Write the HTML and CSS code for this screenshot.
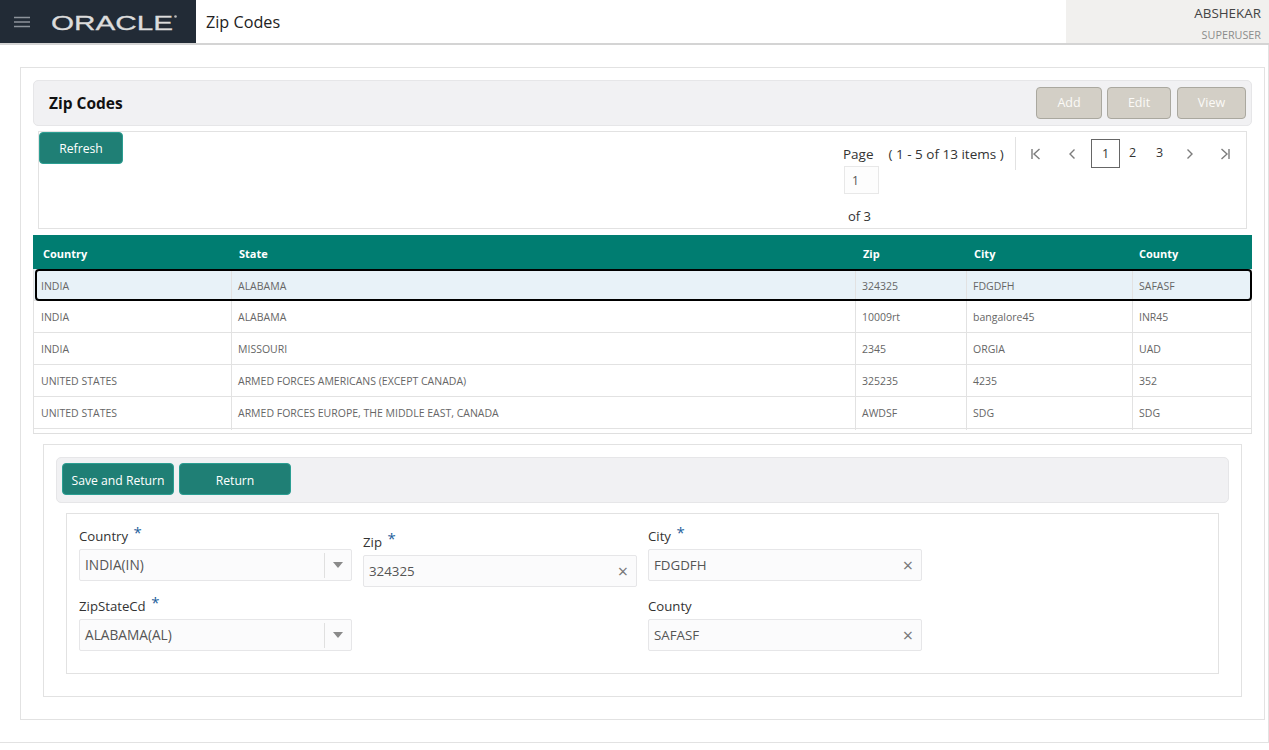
FILE: index.html
```html
<!DOCTYPE html>
<html lang="en">
<head>
<meta charset="utf-8">
<title>Zip Codes</title>
<link rel="stylesheet" href="styles.css">
</head>
<body>
<header class="topbar">
  <div class="brand">
    <svg class="burger" width="18" height="12" viewBox="0 0 18 12"><path d="M1 1.500h16M1 6h16M1 10.500h16" stroke="#8d939b" stroke-width="1.600" fill="none"/></svg>
    <svg class="logo" width="128" height="20" viewBox="0 0 128 20"><text x="0" y="17.500" textLength="122" lengthAdjust="spacingAndGlyphs" class="logo-text">ORACLE</text><circle cx="124.500" cy="4.500" r="1.300" fill="#b9b9b9"/></svg>
  </div>
  <h1 class="page-title">Zip Codes</h1>
  <div class="user">
    <div class="user-name">ABSHEKAR</div>
    <div class="user-role">SUPERUSER</div>
  </div>
</header>

<main class="frame">
  <section class="panel">
    <div class="titlebar">
      <h2 class="section-title">Zip Codes</h2>
      <div class="actions">
        <button class="btn-off btn-add">Add</button>
        <button class="btn-off btn-edit">Edit</button>
        <button class="btn-off btn-view">View</button>
      </div>
    </div>

    <div class="toolbar">
      <button class="btn btn-refresh">Refresh</button>
      <div class="pager">
        <div class="pager-info">
          <div class="pager-line"><span>Page</span><span>( 1 - 5 of 13 items )</span></div>
          <div class="pager-input">1</div>
          <div class="pager-of">of 3</div>
        </div>
        <nav class="pager-nav">
          <svg class="pg-icon" width="14" height="14" viewBox="0 0 14 14"><path d="M3 2v10M10.500 2 5 7l5.500 5" stroke="#7c7c7c" stroke-width="1.400" fill="none"/></svg>
          <svg class="pg-icon pg-prev" width="14" height="14" viewBox="0 0 14 14"><path d="M9.500 2.500 5 7l4.500 4.500" stroke="#7c7c7c" stroke-width="1.400" fill="none"/></svg>
          <span class="pg-num pg-current">1</span>
          <span class="pg-num">2</span>
          <span class="pg-num">3</span>
          <svg class="pg-icon pg-next" width="14" height="14" viewBox="0 0 14 14"><path d="M4.500 2.500 9 7l-4.500 4.500" stroke="#7c7c7c" stroke-width="1.400" fill="none"/></svg>
          <svg class="pg-icon pg-last" width="14" height="14" viewBox="0 0 14 14"><path d="M3.500 2 9 7l-5.500 5M11 2v10" stroke="#7c7c7c" stroke-width="1.400" fill="none"/></svg>
        </nav>
      </div>
    </div>

    <div class="grid">
      <div class="grid-head">
        <div>Country</div><div>State</div><div>Zip</div><div>City</div><div>County</div>
      </div>
      <div class="grid-row selected">
        <div>INDIA</div><div>ALABAMA</div><div>324325</div><div>FDGDFH</div><div>SAFASF</div>
      </div>
      <div class="grid-row">
        <div>INDIA</div><div>ALABAMA</div><div>10009rt</div><div>bangalore45</div><div>INR45</div>
      </div>
      <div class="grid-row">
        <div>INDIA</div><div>MISSOURI</div><div>2345</div><div>ORGIA</div><div>UAD</div>
      </div>
      <div class="grid-row">
        <div>UNITED STATES</div><div>ARMED FORCES AMERICANS (EXCEPT CANADA)</div><div>325235</div><div>4235</div><div>352</div>
      </div>
      <div class="grid-row">
        <div>UNITED STATES</div><div>ARMED FORCES EUROPE, THE MIDDLE EAST, CANADA</div><div>AWDSF</div><div>SDG</div><div>SDG</div>
      </div>
    </div>

    <section class="detail">
      <div class="detail-bar">
        <button class="btn btn-wide">Save and Return</button>
        <button class="btn btn-wide">Return</button>
      </div>
      <div class="form">
        <div class="field">
          <label class="label">Country <span class="req">*</span></label>
          <div class="control"><span class="value value-select">INDIA(IN)</span><span class="sep"></span><span class="caret"></span></div>
        </div>
        <div class="field field-low">
          <label class="label">Zip <span class="req">*</span></label>
          <div class="control"><span class="value">324325</span><span class="clear">×</span></div>
        </div>
        <div class="field">
          <label class="label">City <span class="req">*</span></label>
          <div class="control"><span class="value">FDGDFH</span><span class="clear">×</span></div>
        </div>
        <div class="field">
          <label class="label">ZipStateCd <span class="req">*</span></label>
          <div class="control"><span class="value value-select">ALABAMA(AL)</span><span class="sep"></span><span class="caret"></span></div>
        </div>
        <div class="field field-empty"></div>
        <div class="field">
          <label class="label">County</label>
          <div class="control"><span class="value">SAFASF</span><span class="clear">×</span></div>
        </div>
      </div>
    </section>
  </section>
</main>
</body>
</html>
```
FILE: styles.css
```css
* { box-sizing: border-box; }
html, body { margin: 0; padding: 0; }
body {
  width: 1269px;
  height: 750px;
  overflow: hidden;
  background: #fff;
  font-family: "Open Sans", "Noto Sans", sans-serif;
  font-size: 13px;
  color: #333;
}
button { font-family: inherit; }

.topbar {
  display: flex;
  height: 45px;
  border-bottom: 2px solid #d4d4d4;
}
.brand {
  width: 196px;
  background: #222b36;
  display: flex;
  align-items: center;
  padding-left: 13px;
  gap: 20px;
}
.logo-text {
  font-family: "Liberation Sans", sans-serif;
  font-size: 21px;
  fill: #dcdcdc;
  stroke: #dcdcdc;
  stroke-width: 0.3px;
}
.page-title {
  margin: 0;
  padding-left: 10px;
  flex: 1;
  font-size: 16.200px;
  font-weight: 400;
  line-height: 45px;
  color: #222;
}
.user {
  width: 203px;
  background: #f1f0ee;
  text-align: right;
  padding: 4px 8px 0 0;
}
.user-name { font-size: 13.400px; line-height: 18px; color: #444; }
.user-role { font-size: 10.800px; line-height: 15px; margin-top: 5px; color: #8c8c8c; }

.frame {
  height: 698px;
  border-right: 1px solid #e2e2e2;
  border-bottom: 1px solid #e2e2e2;
  padding: 22px 3px 0 20px;
}
.panel {
  border: 1px solid #e2e2e2;
  height: 653px;
  padding: 12px;
}
.titlebar {
  height: 46px;
  background: #f1f1f3;
  border: 1px solid #e6e6e8;
  border-radius: 5px;
  display: flex;
  align-items: center;
  justify-content: space-between;
  padding: 0 5px 1px 15px;
}
.section-title { margin: 0; font-size: 15.500px; font-weight: 700; color: #111; line-height: 40px; }
.actions { display: flex; gap: 5px; }
.btn-off {
  height: 32px;
  background: #d3cfc6;
  border: 1px solid #aaa89f;
  border-radius: 4px;
  color: #fbfaf7;
  font-size: 12.500px;
  padding: 0;
}
.btn-add { width: 66px; }
.btn-edit { width: 64px; }
.btn-view { width: 69px; margin-left: 1px; }

.toolbar {
  margin: 5px 5px 0;
  height: 98px;
  border: 1px solid #e2e2e2;
  display: flex;
  justify-content: space-between;
}
.btn {
  background: #1f7f75;
  border: 1px solid #2b9e92;
  border-radius: 4px;
  color: #fff;
  font-size: 12.200px;
  height: 32px;
  padding: 0;
}
.btn-refresh { width: 84px; }
.pager { display: flex; align-items: flex-start; padding: 5px 0 0 0; }
.pager-info {
  width: 173px;
  font-size: 13.500px;
  color: #333;
}
.pager-line { display: flex; gap: 15px; line-height: 35px; height: 29px; white-space: nowrap; }
.pager-input {
  width: 35px;
  height: 28px;
  margin: 0 0 0 1px;
  border: 1px solid #e8e8e8;
  background: #fdfdfd;
  line-height: 27px;
  padding-left: 7px;
  font-size: 12px;
  color: #555;
}
.pager-of { line-height: 18px; margin: 13px 0 0 5px; font-size: 13px; }
.pager-nav {
  display: flex;
  align-items: center;
  height: 33px;
  border-left: 1px solid #e2e2e2;
  padding-left: 13px;
  margin-right: 14px;
  margin-left: -1px;
}
.pg-icon { flex: none; }
.pg-prev { margin-left: 22px; margin-right: 12px; }
.pg-next { margin-left: 11px; }
.pg-last { margin-left: 21px; }
.pg-num {
  width: 29px;
  height: 29px;
  line-height: 27px;
  text-align: center;
  font-size: 12.500px;
  color: #333;
  margin-right: -2px;
}
.pg-current { border: 1px solid #666; }

.grid {
  margin-top: 6px;
  height: 199px;
  border-bottom: 1px solid #dfdfdf;
  box-shadow: inset 1px 0 #e2e2e2, inset -1px 0 #e2e2e2;
}
.grid-head, .grid-row { display: grid; }
.grid-head {
  grid-template-columns: 196px 624px 111px 165px 1fr;
  height: 34px;
  background: #007d71;
  color: #fff;
  font-size: 11px;
  font-weight: 700;
  line-height: 37px;
}
.grid-head div { padding-left: 10px; }
.grid-row {
  grid-template-columns: 198px 624px 111px 166px 1fr;
  height: 32px;
  border-bottom: 1px solid #e2e2e2;
  border-left: 1px solid #e2e2e2;
  font-size: 10.500px;
  color: #666;
  line-height: 33px;
  position: relative;
}
.grid-row div {
  padding-left: 6px;
  border-right: 1px solid #e2e2e2;
  white-space: nowrap;
}
.grid-row div:first-child { padding-left: 7px; }
.selected { background: #e8f2f8; line-height: 34px; }
.selected::after {
  content: "";
  position: absolute;
  inset: 0 0 -1px 1px;
  border: 2px solid #000;
  border-radius: 4px;
}

.detail {
  margin: 10px 10px 0;
  height: 253px;
  border: 1px solid #e2e2e2;
  padding: 12px;
}
.detail-bar {
  height: 46px;
  background: #f1f1f3;
  border: 1px solid #e6e6e8;
  border-radius: 5px;
  display: flex;
  align-items: center;
  gap: 5px;
  padding: 0 0 2px 5px;
}
.btn-wide { width: 112px; padding-top: 2px; }
.form {
  margin: 10px 10px 0;
  height: 161px;
  border: 1px solid #e2e2e2;
  padding: 13px 12px 0;
  display: grid;
  grid-template-columns: 273px 274px 274px;
  column-gap: 11px;
  row-gap: 10px;
  align-content: start;
}
.field { display: flex; flex-direction: column; }
.field-low { padding-top: 6px; }
.label {
  height: 22px;
  font-size: 13.200px;
  line-height: 19px;
  color: #333;
}
.req {
  color: #1f5f9c;
  font-size: 15px;
  line-height: 0;
  vertical-align: 3px;
  margin-left: 2px;
}
.control {
  height: 32px;
  background: #fbfbfc;
  border: 1px solid #e6e6e8;
  border-radius: 2px;
  display: flex;
  align-items: center;
  padding-left: 5px;
}
.value { flex: 1; font-size: 13.300px; color: #555; }
.value-select { font-size: 13.700px; line-height: 17px; padding-bottom: 1px; }
.sep { width: 1px; height: 25px; background: #e0e0e0; }
.caret {
  width: 26px;
  display: flex;
  justify-content: center;
}
.caret::before {
  content: "";
  border-left: 5px solid transparent;
  border-right: 5px solid transparent;
  border-top: 6px solid #8a8a8a;
}
.clear { width: 26px; text-align: center; font-size: 18px; line-height: 1; color: #777; }
```
